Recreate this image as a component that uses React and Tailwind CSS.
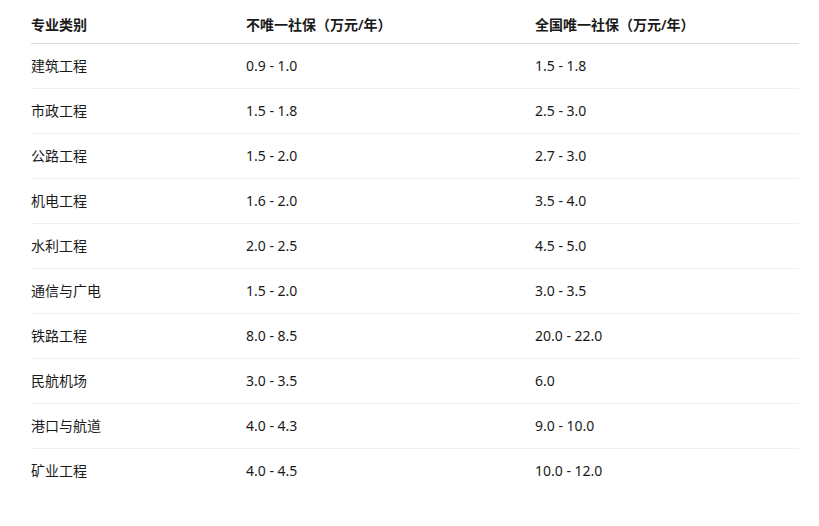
const ROWS = [
  ['建筑工程', '0.9 - 1.0', '1.5 - 1.8'],
  ['市政工程', '1.5 - 1.8', '2.5 - 3.0'],
  ['公路工程', '1.5 - 2.0', '2.7 - 3.0'],
  ['机电工程', '1.6 - 2.0', '3.5 - 4.0'],
  ['水利工程', '2.0 - 2.5', '4.5 - 5.0'],
  ['通信与广电', '1.5 - 2.0', '3.0 - 3.5'],
  ['铁路工程', '8.0 - 8.5', '20.0 - 22.0'],
  ['民航机场', '3.0 - 3.5', '6.0'],
  ['港口与航道', '4.0 - 4.3', '9.0 - 10.0'],
  ['矿业工程', '4.0 - 4.5', '10.0 - 12.0'],
]

const cols = 'grid grid-cols-[215px_289px_264px]'

export default function App() {
  return (
    <div className="w-[819px] h-[526px] bg-white pl-[31px] pt-[7px] font-['Noto_Sans','Noto_Sans_CJK_SC',sans-serif] text-[14px] text-[#1a1a1a]">
      {/* 表头 */}
      <div className={`${cols} w-[768px] border-b border-[#dcdcdc] py-[8px] leading-[20px] font-semibold`}>
        <div>专业类别</div>
        <div>不唯一社保（万元/年）</div>
        <div>全国唯一社保（万元/年）</div>
      </div>
      {ROWS.map((r, i) => (
        <div
          key={r[0]}
          className={`${cols} w-[768px] py-[12px] leading-[20px] ${i < ROWS.length - 1 ? 'border-b border-[#f0f0f0]' : ''}`}
        >
          <div>{r[0]}</div>
          <div>{r[1]}</div>
          <div>{r[2]}</div>
        </div>
      ))}
    </div>
  )
}
